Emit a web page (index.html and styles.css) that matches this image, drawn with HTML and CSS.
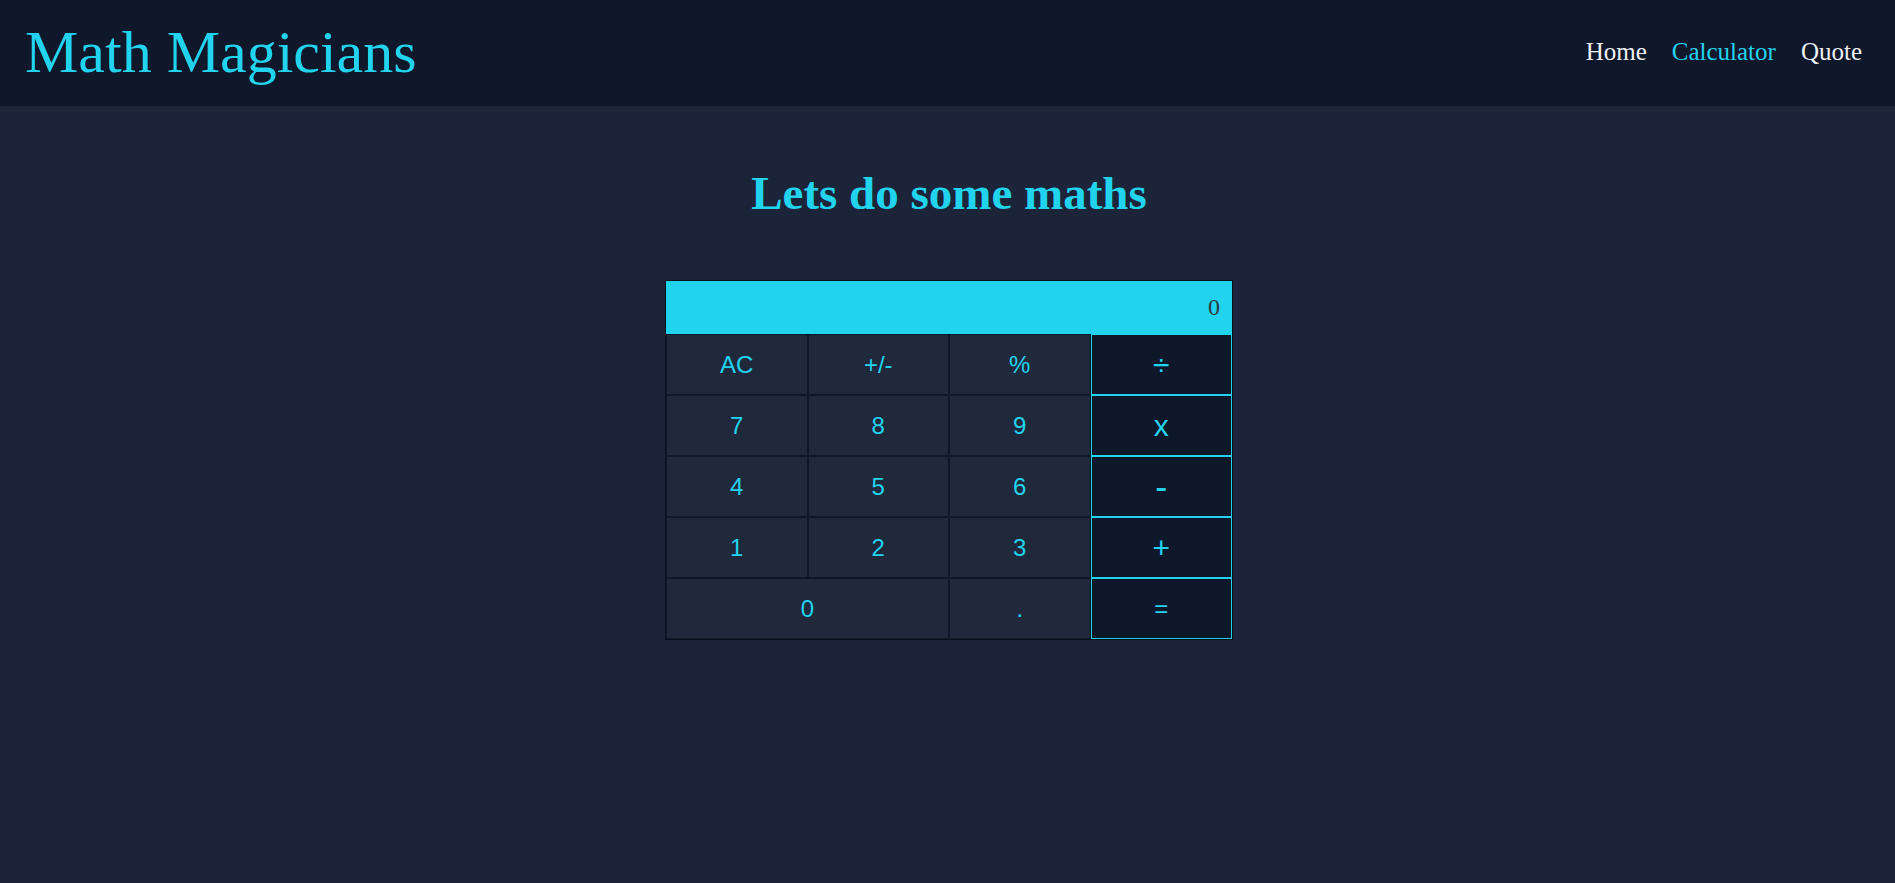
FILE: index.html
```html
<!DOCTYPE html>
<html lang="en">
<head>
<meta charset="utf-8">
<title>Math Magicians</title>
<link rel="stylesheet" href="styles.css">
</head>
<body>
<header class="header">
  <h1 class="logo">Math Magicians</h1>
  <nav class="nav">
    <a class="nav-link" href="#">Home</a>
    <a class="nav-link active" href="#">Calculator</a>
    <a class="nav-link" href="#">Quote</a>
  </nav>
</header>
<main class="main">
  <h2 class="heading">Lets do some maths</h2>
  <div class="calculator">
    <div class="display">0</div>
    <button class="key">AC</button>
    <button class="key">+/-</button>
    <button class="key">%</button>
    <button class="key op op-big">÷</button>
    <button class="key">7</button>
    <button class="key">8</button>
    <button class="key">9</button>
    <button class="key op op-big">x</button>
    <button class="key">4</button>
    <button class="key">5</button>
    <button class="key">6</button>
    <button class="key op op-minus">-</button>
    <button class="key">1</button>
    <button class="key">2</button>
    <button class="key">3</button>
    <button class="key op op-big">+</button>
    <button class="key wide">0</button>
    <button class="key">.</button>
    <button class="key op">=</button>
  </div>
</main>
</body>
</html>
```
FILE: styles.css
```css
* {
  box-sizing: border-box;
}

body {
  margin: 0;
  background: #1c2439;
  font-family: "Liberation Serif", "Times New Roman", serif;
  min-height: 100vh;
}

.header {
  height: 106px;
  background: #0f172a;
  display: flex;
  align-items: center;
  justify-content: space-between;
  padding: 0 33px 0 25px;
}

.logo {
  margin: 0;
  font-size: 60px;
  font-weight: normal;
  color: #22d3ee;
  position: relative;
  top: -1px;
}

.nav {
  display: flex;
  gap: 25px;
  position: relative;
  top: -1px;
}

.nav-link {
  font-size: 25px;
  color: #eef1f5;
  text-decoration: none;
}

.nav-link.active {
  color: #22d3ee;
}

.main {
  display: flex;
  flex-direction: column;
  align-items: center;
  padding-left: 3px;
}

.heading {
  margin: 60px 0 60px;
  font-size: 47px;
  font-weight: bold;
  color: #22d3ee;
}

.calculator {
  width: 568px;
  border: 1px solid #0a0f1c;
  display: grid;
  grid-template-columns: repeat(4, 1fr);
}

.display {
  grid-column: 1 / -1;
  height: 53px;
  background: #22d3ee;
  color: #2f3b3f;
  font-family: "Liberation Serif", "Times New Roman", serif;
  font-size: 24px;
  display: flex;
  align-items: center;
  justify-content: flex-end;
  padding-right: 12px;
}

.key {
  margin: 0;
  padding: 0;
  height: 61px;
  border: 1px solid #0f172a;
  background: #1f293b;
  color: #22d3ee;
  font-family: "Liberation Sans", Arial, sans-serif;
  font-size: 24px;
  cursor: pointer;
}

.key.wide {
  grid-column: span 2;
}

.key.op {
  background: #0f172a;
  border-color: #22d3ee;
}

.key.op-big {
  font-size: 30px;
}

.key.op-minus {
  font-size: 36px;
}
```
